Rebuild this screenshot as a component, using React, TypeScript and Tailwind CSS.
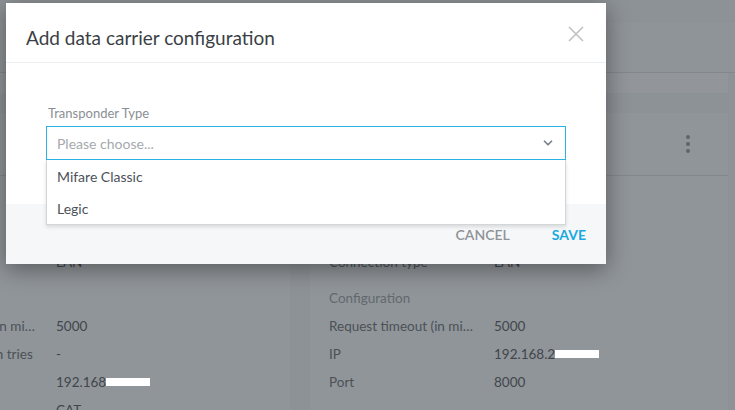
import { ChevronDown } from "lucide-react";

const font = { fontFamily: '"Lato", "Noto Sans", sans-serif' };

function Row({ label, value, redact }: { label: string; value: string; redact?: boolean }) {
  return (
    <div className="flex h-[28px] items-center text-[13.5px]">
      <span className="w-[147px] shrink-0 truncate text-[#4b5157]">{label}</span>
      <span className="ml-[18px] flex items-center text-[#40464c]">
        {value}
        {redact && <span className="h-[8px] w-[44px] bg-white" />}
      </span>
    </div>
  );
}

function Card({ left }: { left?: boolean }) {
  return (
    <div className={`w-[418px] shrink-0 bg-[#909599] ${left ? "ml-[-128px]" : ""}`}>
      <div className="flex h-[63px] items-center justify-end border-b border-[#84888c] pr-[38px]">
        <div className="flex flex-col gap-[3px]">
          <span className="h-[4px] w-[4px] rounded-full bg-[#5f656b]" />
          <span className="h-[4px] w-[4px] rounded-full bg-[#5f656b]" />
          <span className="h-[4px] w-[4px] rounded-full bg-[#5f656b]" />
        </div>
      </div>
      <div className="pl-[19px] pt-[16px]">
        <Row label="Name" value="Reader" />
        <Row label="Direction" value="in/ out" />
        <Row label="Connection type" value="LAN" />
        <div className="mt-[8px] flex h-[28px] items-center text-[13.5px] text-[#62686e]">Configuration</div>
        <Row label="Request timeout (in milliseconds)" value="5000" />
        {left ? (
          <Row label="Request timeout in tries" value="-" />
        ) : (
          <Row label="IP" value="192.168.2" redact />
        )}
        {left ? <Row label="IP" value="192.168" redact /> : <Row label="Port" value="8000" />}
        {left && <Row label="Cable" value="CAT" />}
      </div>
    </div>
  );
}

export default function App() {
  return (
    <div className="relative h-[410px] w-[735px] overflow-hidden bg-[#8d9296]" style={font}>
      {/* dimmed page */}
      <div className="h-[23px] bg-[#8d9296]" />
      <div className="h-[50px] border-b border-[#83878b] bg-[#8f9498]" />
      <div className="h-[20px] w-[728px] bg-[#92969a]" />
      <div className="h-[20px]" />
      <div className="flex h-[297px] gap-[20px]">
        <Card left />
        <Card />
      </div>

      {/* dialog */}
      <div className="absolute left-[6px] top-[3px] w-[600px] bg-white shadow-[0_5px_22px_rgba(0,0,0,0.4)]">
        <div className="flex h-[60px] items-start justify-between border-b border-[#eceef0] pl-[20px] pr-[22px] pt-[22px]">
          <h2 className="text-[19px] leading-[26px] text-[#3a3f45]">Add data carrier configuration</h2>
          <svg width="16" height="16" viewBox="0 0 16 16" className="mt-[1px]">
            <path d="M1 1L15 15M15 1L1 15" stroke="#bfc2c5" strokeWidth="1.6" />
          </svg>
        </div>
        <div className="relative h-[141px] px-[40px] pt-[41px]">
          <label className="ml-[2px] block text-[13px] leading-[18px] text-[#8a8f94]">Transponder Type</label>
          <div className="mt-[4px] flex h-[34px] items-center justify-between border border-[#2ab4e6] pl-[10px] pr-[10px]">
            <span className="text-[14px] text-[#a5a9ad]">Please choose...</span>
            <ChevronDown size={14} strokeWidth={3} className="text-[#7a8087]" />
          </div>
          <ul className="absolute left-[40px] right-[40px] top-[97px] z-10 border border-t-0 border-[#d3d6d9] bg-white shadow-[0_2px_4px_rgba(0,0,0,0.12)]">
            <li className="flex h-[32px] items-center pl-[10px] text-[14px] text-[#4b5259]">Mifare Classic</li>
            <li className="flex h-[32px] items-center pl-[10px] text-[14px] text-[#4b5259]">Legic</li>
          </ul>
        </div>
        <div className="flex h-[60px] items-center justify-end gap-[42px] bg-[#f6f7f9] pr-[20px]">
          <button className="text-[14px] font-semibold text-[#8e9398]">CANCEL</button>
          <button className="text-[14px] font-bold text-[#19a9e1]">SAVE</button>
        </div>
      </div>
    </div>
  );
}
